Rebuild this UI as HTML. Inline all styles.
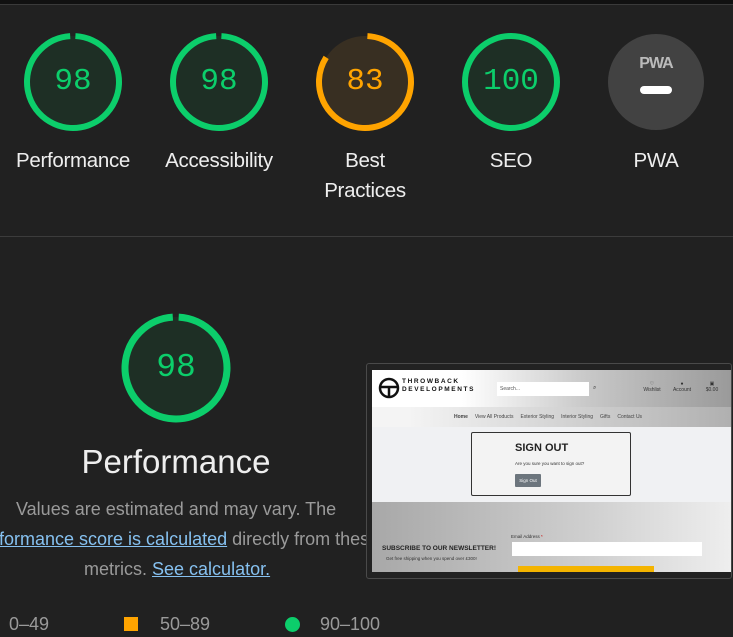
<!DOCTYPE html>
<html><head><meta charset="utf-8"><style>
*{margin:0;padding:0;box-sizing:border-box}
body{width:733px;height:637px;background:#212121;font-family:"Liberation Sans",Arial,sans-serif;position:relative;overflow:hidden;color:#e8e8e8}
.abs{position:absolute}
.num{position:absolute;width:100px;top:0;line-height:100px;text-align:center;font-family:"Liberation Mono","DejaVu Sans Mono",monospace;font-size:31px}
.lab{position:absolute;width:146px;text-align:center;font-size:20.5px;color:#eee;line-height:30px;letter-spacing:-0.3px}
.t{position:absolute;font-size:18px;color:#9a9a9a;white-space:nowrap}
.t a{color:#86c1f0;text-decoration:underline}
.nav span{margin-right:7px}
</style></head><body>
<div class="abs" style="left:0;top:0;width:733px;height:4px;background:#111"></div>
<div class="abs" style="left:0;top:4px;width:733px;height:1px;background:#3a3a3a"></div>

<svg class="abs" style="left:0;top:0" width="733" height="240">
 <g transform="translate(73,82)"><circle r="46" fill="#1e2f25"/><circle r="46" fill="none" stroke="#0cce6b" stroke-width="6" stroke-dasharray="283.3 289" transform="rotate(-87)"/></g>
 <g transform="translate(219,82)"><circle r="46" fill="#1e2f25"/><circle r="46" fill="none" stroke="#0cce6b" stroke-width="6" stroke-dasharray="283.3 289" transform="rotate(-87)"/></g>
 <g transform="translate(365,82)"><circle r="46" fill="#382f22"/><circle r="46" fill="none" stroke="#ffa400" stroke-width="6" stroke-dasharray="240 289" transform="rotate(-87)"/></g>
 <g transform="translate(511,82)"><circle r="46" fill="#1e2f25"/><circle r="46" fill="none" stroke="#0cce6b" stroke-width="6"/></g>
 <g transform="translate(656,82)"><circle r="48" fill="#424242"/><rect x="-16" y="4" width="32" height="8" rx="4" fill="#fff"/>
 <text x="0" y="-14" text-anchor="middle" font-family="Liberation Sans Narrow, Liberation Sans" font-weight="bold" font-size="16" fill="#bbb" letter-spacing="-1">PWA</text></g>
</svg>
<div class="num" style="left:23px;top:32px;color:#0cce6b">98</div>
<div class="num" style="left:169px;top:32px;color:#0cce6b">98</div>
<div class="num" style="left:315px;top:32px;color:#ffa400">83</div>
<div class="num" style="left:461px;top:32px;color:#0cce6b">100</div>

<div class="lab" style="left:0;top:146px">Performance</div>
<div class="lab" style="left:146px;top:146px">Accessibility</div>
<div class="lab" style="left:292px;top:146px">Best<br>Practices</div>
<div class="lab" style="left:438px;top:146px">SEO</div>
<div class="lab" style="left:583px;top:146px">PWA</div>

<div class="abs" style="left:0;top:236px;width:733px;height:1px;background:#3c3c3c"></div>

<svg class="abs" style="left:116px;top:308px" width="120" height="120">
 <g transform="translate(60,60)"><circle r="51" fill="#1e2f25"/><circle r="51" fill="none" stroke="#0cce6b" stroke-width="7" stroke-dasharray="314 321" transform="rotate(-87)"/></g>
</svg>
<div class="num" style="left:126px;top:318px;color:#0cce6b;font-size:33px">98</div>
<div class="abs" style="left:26px;width:300px;top:443px;text-align:center;font-size:33px;color:#eee">Performance</div>

<div class="t" style="left:16px;top:499px">Values are estimated and may vary. The</div>
<div class="t" style="left:-29px;top:529px"><a>Performance score is calculated</a> directly from these</div>
<div class="t" style="left:84px;top:559px">metrics. <a>See calculator.</a></div>

<div class="t" style="left:9px;top:614px">0–49</div>
<div class="abs" style="left:124px;top:617px;width:14px;height:14px;background:#ffa400"></div>
<div class="t" style="left:160px;top:614px">50–89</div>
<div class="abs" style="left:285px;top:617px;width:15px;height:15px;border-radius:50%;background:#0cce6b"></div>
<div class="t" style="left:320px;top:614px">90–100</div>

<!-- screenshot -->
<div class="abs" style="left:366px;top:363px;width:366px;height:216px;background:#222;border:1px solid #4a4a4a;border-radius:3px"></div>
<div class="abs" style="left:372px;top:370px;width:359px;height:202px;background:#f0f1f3;overflow:hidden;font-family:'Liberation Sans Narrow','Liberation Sans',sans-serif">
 <div class="abs" style="left:0;top:0;width:359px;height:37px;background:linear-gradient(90deg,#fff 25%,#c8c8c8 60%,#9a9a9a 100%)"></div>
 <div class="abs" style="left:0;top:37px;width:359px;height:20px;background:linear-gradient(90deg,#f4f4f4 10%,#b0b0b0 100%)"></div>
 <svg class="abs" style="left:6px;top:7px" width="22" height="22"><circle cx="11" cy="11" r="9" fill="none" stroke="#111" stroke-width="2.5"/><path d="M2 10h18M11 10v9" stroke="#111" stroke-width="2.5"/></svg>
 <div class="abs" style="left:30px;top:8px;font-size:6.5px;font-weight:bold;letter-spacing:1.6px;line-height:8px;color:#111">THROWBACK<br>DEVELOPMENTS</div>
 <div class="abs" style="left:125px;top:12px;width:92px;height:14px;background:#fff;font-size:5px;color:#555;padding:4px 3px">Search...</div>
 <div class="abs" style="left:221px;top:15px;font-size:6px;color:#333">⌕</div>
 <div class="abs" style="left:270px;top:11px;font-size:5px;color:#333;text-align:center;width:20px">♡<br>Wishlist</div>
 <div class="abs" style="left:300px;top:11px;font-size:5px;color:#333;text-align:center;width:20px">●<br>Account</div>
 <div class="abs" style="left:330px;top:11px;font-size:5px;color:#333;text-align:center;width:20px">▣<br>$0.00</div>
 <div class="abs nav" style="left:82px;top:44px;font-size:5px;color:#444;white-space:nowrap"><span><b>Home</b></span><span>View All Products</span><span>Exterior Styling</span><span>Interior Styling</span><span>Gifts</span><span>Contact Us</span></div>
 <div class="abs" style="left:99px;top:62px;width:160px;height:64px;background:#f3f3f3;border:1px solid #333;border-radius:2px"></div>
 <div class="abs" style="left:143px;top:72px;font-size:11px;font-weight:bold;color:#222">SIGN OUT</div>
 <div class="abs" style="left:143px;top:91px;font-size:4.5px;color:#333">Are you sure you want to sign out?</div>
 <div class="abs" style="left:143px;top:104px;width:26px;height:13px;background:#6c757d;border-radius:1px;font-size:4.5px;color:#fff;text-align:center;line-height:13px">Sign Out</div>
 <div class="abs" style="left:0;top:132px;width:359px;height:70px;background:linear-gradient(90deg,#a8a8a8,#cfcfcf 60%,#eee)"></div>
 <div class="abs" style="left:10px;top:175px;font-size:6.5px;font-weight:bold;color:#222">SUBSCRIBE TO OUR NEWSLETTER!</div>
 <div class="abs" style="left:14px;top:186px;font-size:4.5px;color:#333">Get free shipping when you spend over £300!</div>
 <div class="abs" style="left:139px;top:164px;font-size:4.5px;color:#333">Email Address <span style="color:#c00">*</span></div>
 <div class="abs" style="left:140px;top:172px;width:190px;height:14px;background:#fff"></div>
 <div class="abs" style="left:146px;top:196px;width:136px;height:10px;background:#f4b400"></div>
</div>
</body></html>
